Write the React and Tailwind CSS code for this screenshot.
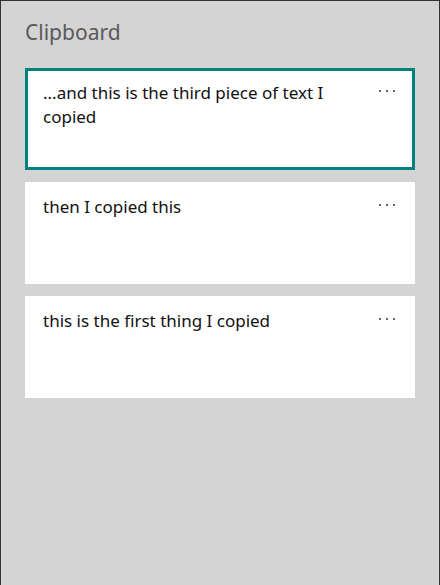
import React from 'react';

const items = [
  '...and this is the third piece of text I copied',
  'then I copied this',
  'this is the first thing I copied',
];

const ClipItem = ({ text, selected }) => (
  <div
    className={`flex h-[102px] w-full border-[3px] bg-white pl-[15px] pr-[17px] pt-[10px] ${
      selected ? 'border-[#008080]' : 'border-white'
    }`}
  >
    <p className="flex-1 pr-[20px] text-[17px] leading-[24px] text-[#111]">{text}</p>
    <div className="flex h-[24px] items-start gap-[5px] pt-[9px]">
      <span className="block h-[2px] w-[2px] bg-[#6b6b6b]" />
      <span className="block h-[2px] w-[2px] bg-[#6b6b6b]" />
      <span className="block h-[2px] w-[2px] bg-[#6b6b6b]" />
    </div>
  </div>
);

export default function App() {
  return (
    <div
      className="h-[585px] w-[440px] overflow-hidden border-x border-t border-[#333] bg-[#d4d4d4] px-6"
      style={{ fontFamily: '"Noto Sans", "Open Sans", sans-serif' }}
    >
      <h1 className="pt-[15px] text-[21px] leading-[32px] text-[#5a5a5a]">Clipboard</h1>
      <div className="mt-[20px] flex flex-col gap-[12px]">
        {items.map((t, i) => (
          <ClipItem key={i} text={t} selected={i === 0} />
        ))}
      </div>
    </div>
  );
}
